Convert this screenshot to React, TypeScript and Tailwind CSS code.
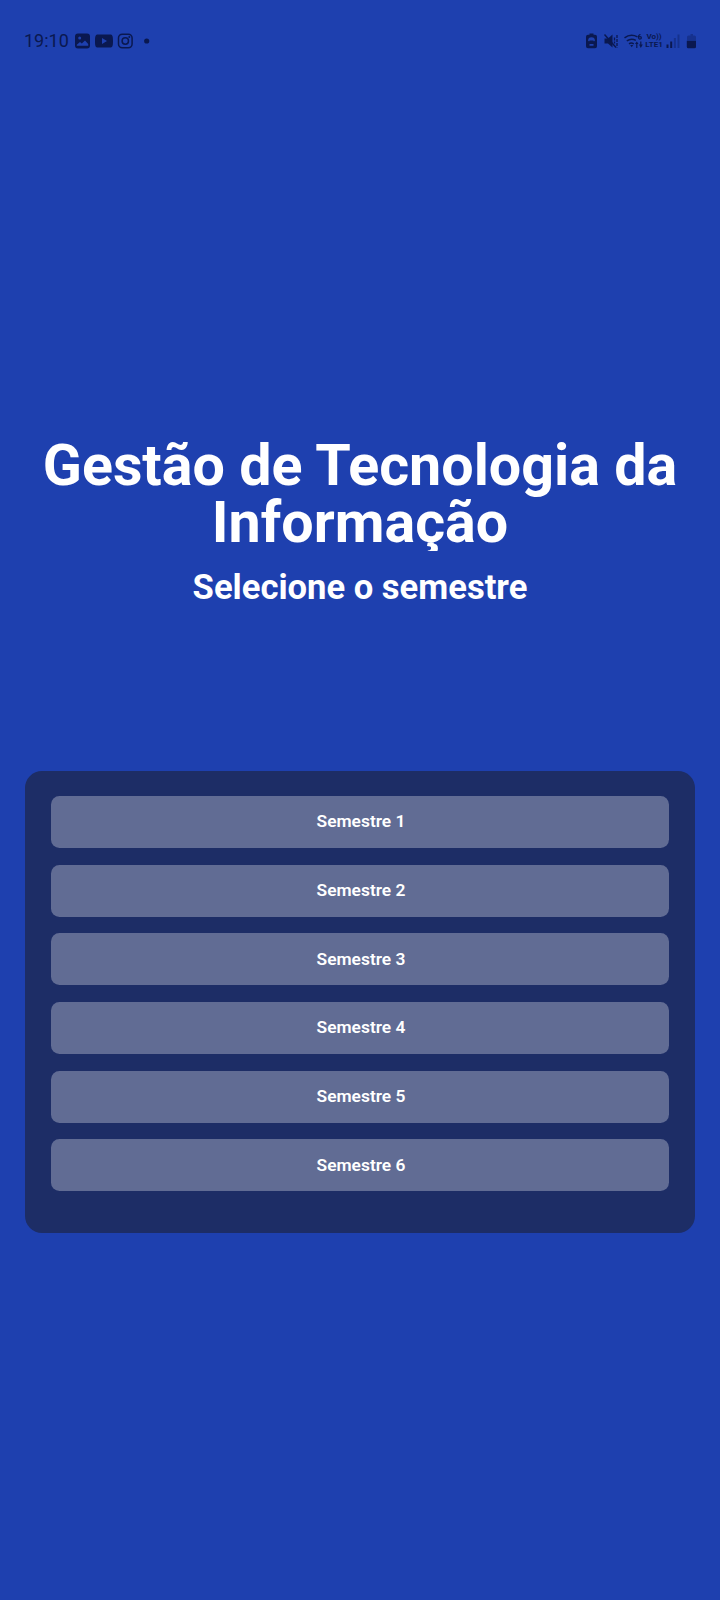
const semesters = [1, 2, 3, 4, 5, 6];

function StatusBar() {
  return (
    <header className="flex h-[81px] shrink-0 items-center justify-between pr-[23px] pl-6 text-[#0a1850]">
      <div className="flex items-center">
        <span className="w-[50.500px] text-[18px] leading-none whitespace-nowrap">19:10</span>
        <svg className="h-4 w-[76px]" viewBox="0 0 76 16" fill="none">
          <path fill="currentColor" fillRule="evenodd" d="M3 .5h9a3 3 0 0 1 3 3v9a3 3 0 0 1-3 3H3a3 3 0 0 1-3-3v-9a3 3 0 0 1 3-3ZM1.800 12.700h11.400V11L10 7.500l-3.200 3-1.800-1.400-3.200 2.700ZM4.700 3.500a1.500 1.500 0 1 0 0 3 1.500 1.500 0 0 0 0-3Z" />
          <path fill="currentColor" fillRule="evenodd" d="M23 1.500h12c2.500 0 3 1.500 3 6.500s-.5 6.500-3 6.500H23c-2.500 0-3-1.500-3-6.500s.5-6.500 3-6.500ZM27 5v6l5-3Z" />
          <rect x="43.500" y="1.200" width="13.600" height="13.600" rx="3.800" stroke="currentColor" strokeWidth="1.500" />
          <circle cx="50.300" cy="8" r="3.200" stroke="currentColor" strokeWidth="1.500" />
          <circle cx="54.300" cy="4" r="1" fill="currentColor" />
          <circle cx="71.700" cy="8" r="2.600" fill="currentColor" />
        </svg>
      </div>
      <div className="flex items-center">
        <svg className="h-4 w-[58px]" viewBox="0 0 58 16" fill="none">
          <path fill="currentColor" fillRule="evenodd" d="M3.500.5h4v1.300H9q2 0 2 2v9.500q0 2-2 2H2q-2 0-2-2V3.800q0-2 2-2h1.500ZM5.500 4.300a3.400 3.400 0 0 0-3.400 3.400l1 .8.6-1h3.600l.6 1 1-.8a3.400 3.400 0 0 0-3.400-3.400ZM3.500 11v1.700h4V11Z" />
          <path fill="currentColor" d="M18.500 5.500H22l4.500-4v13l-4.500-4h-3.500Z" />
          <path stroke="currentColor" strokeWidth="1.500" d="m18.500 1.500 11.500 13" />
          <path stroke="currentColor" strokeWidth="1.300" strokeDasharray="3 1" d="M28.500 4.500v6M31 2v12.500" />
          <path stroke="currentColor" strokeWidth="1.500" d="M38.500 4.800q6-4.500 13-1M40.800 7.900q4.500-3 9-.5M43 10.800q2.200-1.500 4.800 0" />
          <path fill="currentColor" d="m44.200 12 1.500 2.200 1.500-2.200ZM49 11l1.800-2.500 1.800 2.500h-1.200v4h-1.200v-4ZM53 11.500h1.200v-3h1.200v3h1.400L54.800 15Z" />
          <path stroke="currentColor" strokeWidth="1.200" d="M54.500 1.500q-2 .2-2 2.500t1.800 2q1.500-.5.800-2-1-.8-2.400 0" />
        </svg>
        <span className="flex w-5 flex-col items-center text-[8px] leading-[8px] font-bold whitespace-nowrap">
          <span>Vo))</span>
          <span>LTE1</span>
        </span>
        <svg className="h-4 w-[33px]" viewBox="0 0 33 16" fill="currentColor">
          <path d="M2.500 11.500h2V15h-2ZM6.200 8.500h2V15h-2Z" />
          <path opacity=".35" d="M9.900 5h2v10h-2ZM13.500 1.500h2V15h-2Z" />
          <path opacity=".35" d="M24.500 2.500h2V1h2.500v1.500h1.500q1.500 0 1.500 1.500v3.500h-9V4q0-1.500 1.500-1.500Z" />
          <path d="M22.800 7.800H32v6q0 1.500-1.500 1.500h-6.200q-1.500 0-1.500-1.500Z" />
        </svg>
      </div>
    </header>
  );
}

export default function App() {
  return (
    <main className="flex h-[1600px] w-[720px] flex-col bg-[#1e40af] font-[Roboto,sans-serif]">
      <StatusBar />
      <section className="mt-[355px] flex flex-col items-center text-center font-bold text-white">
        <h1 className="h-[115px] w-[661px] overflow-hidden pt-px text-[57.400px] leading-[57.200px]">
          Gestão de Tecnologia da Informação
        </h1>
        <h2 className="mt-[14px] text-[34.600px] leading-[44px]">Selecione o semestre</h2>
      </section>
      <section className="mx-[25.300px] mt-[161.500px] flex h-[462px] shrink-0 flex-col gap-[16.650px] rounded-[17px] bg-[#1d2d66] px-[25.500px] pt-[25.500px]">
        {semesters.map((semester) => (
          <button
            key={semester}
            type="button"
            className="h-[52px] w-full shrink-0 rounded-[8.500px] bg-[#616c94] pb-px pl-[2px] text-[17.400px] font-semibold text-white"
          >
            Semestre {semester}
          </button>
        ))}
      </section>
    </main>
  );
}
